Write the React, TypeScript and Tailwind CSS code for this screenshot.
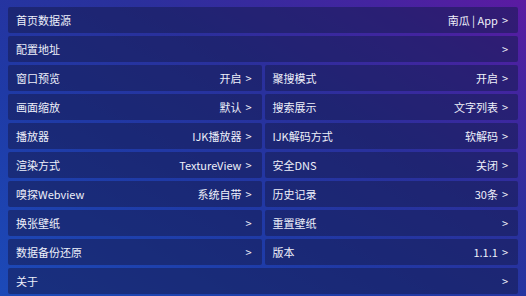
import React from "react";

type Item = { label: string; value?: string };

const Tile = ({ label, value, full }: Item & { full?: boolean }) => (
  <div
    className={`flex h-[26px] items-center justify-between rounded-[2px] bg-[rgba(22,28,80,0.55)] pl-[8px] pr-[10px] text-[11px] text-[#eef0fa] ${full ? "w-full" : "flex-1"}`}
  >
    <span>{label}</span>
    <span className="flex items-center gap-[4px]">
      {value ? <span>{value}</span> : null}
      <span>&gt;</span>
    </span>
  </div>
);

const pairs: [Item, Item][] = [
  [{ label: "窗口预览", value: "开启" }, { label: "聚搜模式", value: "开启" }],
  [{ label: "画面缩放", value: "默认" }, { label: "搜索展示", value: "文字列表" }],
  [{ label: "播放器", value: "IJK播放器" }, { label: "IJK解码方式", value: "软解码" }],
  [{ label: "渲染方式", value: "TextureView" }, { label: "安全DNS", value: "关闭" }],
  [{ label: "嗅探Webview", value: "系统自带" }, { label: "历史记录", value: "30条" }],
  [{ label: "换张壁纸" }, { label: "重置壁纸" }],
  [{ label: "数据备份还原" }, { label: "版本", value: "1.1.1" }],
];

export default function App() {
  return (
    <div
      className="flex h-[296px] w-[526px] flex-col gap-[3px] overflow-hidden px-[8px] pt-[7px]"
      style={{
        fontFamily: '"Noto Sans CJK SC", "Noto Sans", Roboto, sans-serif',
        background:
          "linear-gradient(to top right, #1c4ab8 0%, #1f3aa6 35%, #2a309c 62%, #4424a0 85%, #5c1aa2 100%)",
      }}
    >
      <Tile label="首页数据源" value="南瓜 | App" full />
      <Tile label="配置地址" full />
      {pairs.map(([a, b], i) => (
        <div key={i} className="flex gap-[3px]">
          <Tile {...a} />
          <Tile {...b} />
        </div>
      ))}
      <Tile label="关于" full />
    </div>
  );
}
